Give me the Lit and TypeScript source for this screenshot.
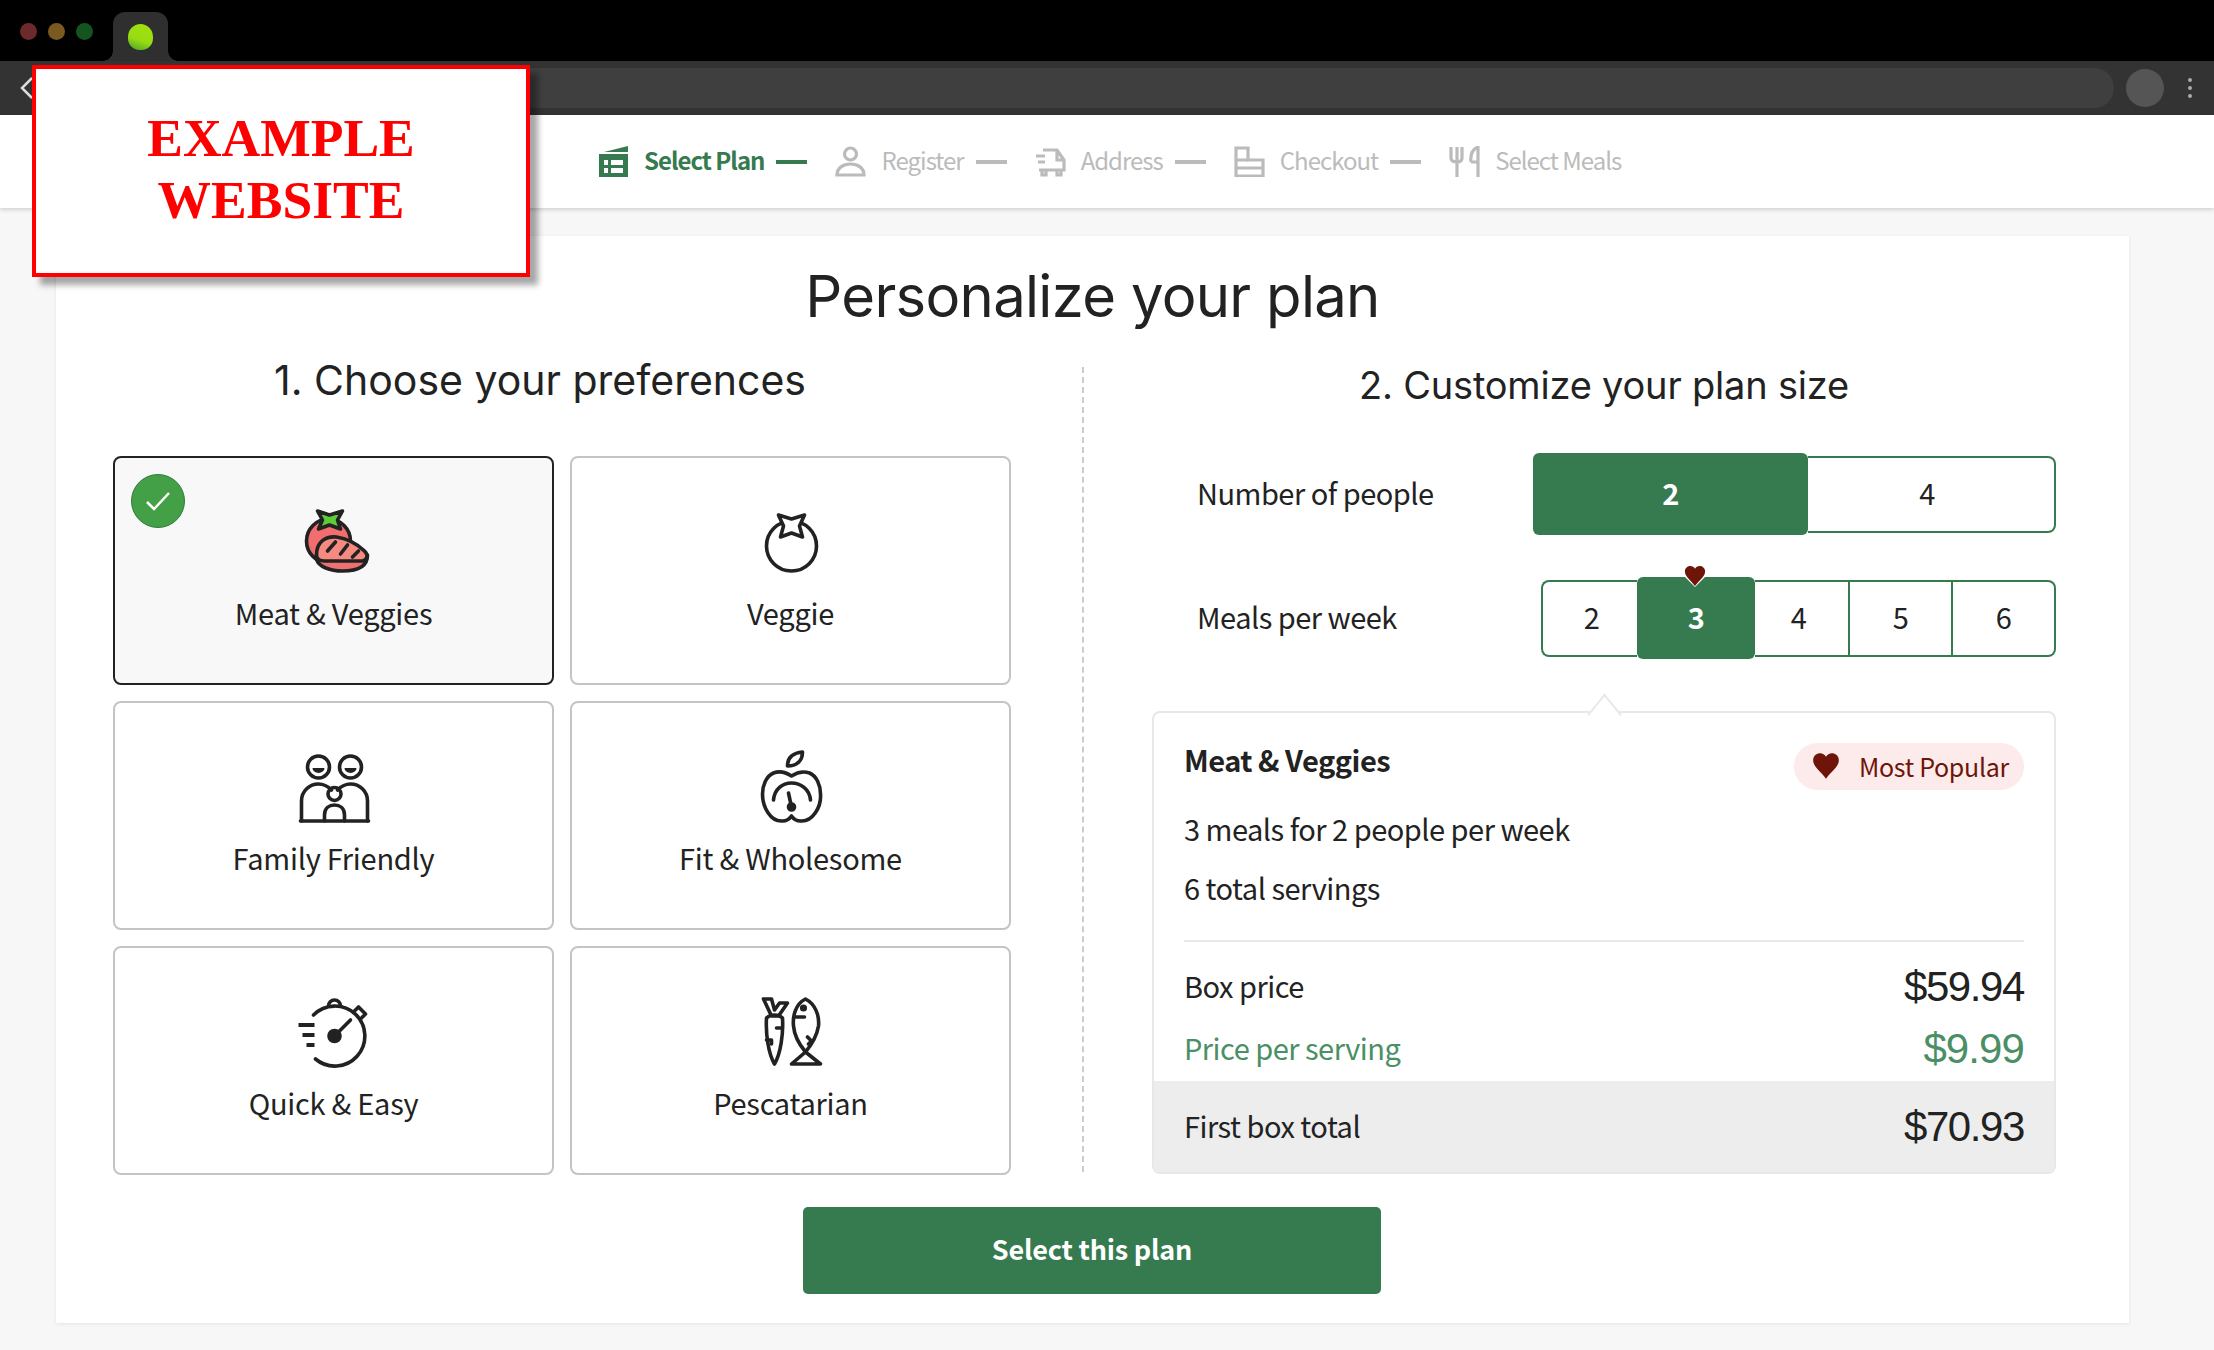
import { LitElement, html, css, svg } from 'lit';
import { customElement, state } from 'lit/decorators.js';

const heart = (size: number) => html`<svg class="heart" width=${size} height=${size} viewBox="0 0 24 24"><path d="M12 23 C8 17 1 13 1 7 C1 3 4 1 7 1 C9 1 11 2 12 4 C13 2 15 1 17 1 C20 1 23 3 23 7 C23 13 16 17 12 23 Z" fill="#6f1408"/></svg>`;

// option icons are drawn in a 120x100 box
const icons: Record<string, any> = {
  meat: svg`
    <circle cx="48" cy="52" r="22" fill="#f26d6d"/>
    <path d="M37 22 L49 26 L62 22 L57 31 L60 40 L49 36 L38 40 L42 31 Z" fill="#5ecb3a"/>
    <path d="M36 70 C38 78 50 82 62 82 C76 82 87 78 87 66 L36 66 Z" fill="#ef7070"/>
    <path d="M36 66 C36 52 46 47 56 48 C68 50 78 56 84 62 C88 66 87 71 82 72 L44 72 C40 72 36 70 36 66 Z" fill="#f58a80"/>
    <path d="M47 62 L55 53 M60 65 L67 56 M72 68 L78 62"/>`,
  veggie: svg`
    <circle cx="61" cy="57" r="25"/>
    <path d="M48 26 L61 30 L74 26 L69 37 L72 48 L61 44 L50 48 L53 37 Z" fill="#fff"/>`,
  family: svg`
    <circle cx="38" cy="28" r="11"/><circle cx="70" cy="28" r="11"/>
    <path d="M32 29 h12 a6 5 0 0 1 -12 0 Z M64 29 h12 a6 5 0 0 1 -12 0 Z" fill="#222" stroke="none"/>
    <path d="M21 82 V62 C21 52 29 45 38 45 C44 45 48 48 51 51"/>
    <path d="M87 82 V62 C87 52 79 45 70 45 C64 45 60 48 57 51"/>
    <circle cx="54" cy="55" r="6.5"/>
    <path d="M44 82 V76 C44 69 49 66 54 66 C59 66 64 69 64 76 V82"/>
    <path d="M20 82 H88"/>`,
  fit: svg`
    <path d="M57 27 C57 19 62 14 72 13 C72 22 66 27 57 27 Z"/>
    <path d="M61 37 C55 33 48 32 43 34 C36 37 32 46 32 55 C32 68 40 83 52 82 C56 82 59 80 61 77 C63 80 66 82 70 82 C82 83 91 68 90 55 C90 46 86 37 79 34 C73 32 67 33 61 37 Z"/>
    <path d="M43 61 C44 50 52 44 61 44 C70 44 79 50 80 61"/>
    <path d="M58 54 L61 68"/><circle cx="61" cy="68" r="3" fill="#222"/>`,
  quick: svg`
    <path d="M33 31 A30 30 0 1 1 35 75"/>
    <path d="M48 22 A6 6 0 0 1 60 22"/>
    <path d="M74 27 L78 23 L85 30 L81 34"/>
    <path d="M18 41 H34 M22 51 H34 M26 61 H34" stroke-width="4" stroke-linecap="butt"/>
    <circle cx="54" cy="52" r="5.5" fill="#222"/>
    <path d="M54 52 L70 36"/>`,
  pesca: svg`
    <path d="M33 15 L41 15 L44 26 L49 19 L57 19 L48 32 L41 32 Z"/>
    <path d="M36 34 C35 50 38 70 44 80 C50 70 53 50 52 34 C48 30 40 30 36 34 Z"/>
    <path d="M52 44 H46 M36 56 H41 V60"/>
    <path d="M75 15 C65 20 62 32 63 42 C64 54 70 62 75 68 C80 62 86 54 88 42 C89 32 85 20 75 15 Z"/>
    <path d="M75 68 L61 80 H90 Z"/>
    <path d="M65 33 H74 M77 53 L81 57 L78 60"/>
    <circle cx="73" cy="24" r="1.8" fill="#222"/>`,
};

// step icons, 31x31
const stepIcons: any[] = [
  svg`<path d="M5 6 L29 0 V6 Z" fill="currentColor"/>
    <path d="M0 8 H29 V31 H0 Z M5 14 V19 H9 V14 Z M12 14 V19 H24 V14 Z M5 22 V27 H9 V22 Z M12 22 V27 H24 V22 Z" fill="currentColor" fill-rule="evenodd"/>`,
  svg`<g fill="none" stroke="currentColor" stroke-width="3.2"><circle cx="15.5" cy="8" r="6"/>
    <path d="M2 29 C2 22 8 18 15.5 18 C23 18 29 22 29 29 Z"/></g>`,
  svg`<g fill="none" stroke="currentColor" stroke-width="3.2"><path d="M8 4 H22 L29 14 V24 H4 M22 4 V14 H29"/>
    <path d="M1 10 H10 M3 16 H10"/><path d="M7 24 V29 H11 V24 M22 24 V29 H26 V24"/></g>`,
  svg`<g fill="none" stroke="currentColor" stroke-width="3.2"><path d="M2 30 V2 H14 V14 H29 V30 Z"/>
    <path d="M2 22 H29 M14 14 H2"/></g>`,
  svg`<g fill="none" stroke="currentColor" stroke-width="3.2"><path d="M2 1 V12 C2 15 5 16 8 16 C11 16 13 15 13 12 V1 M8 1 V31"/>
    <path d="M22 16 C21 8 24 3 29 1 V31 M22 16 H29"/></g>`,
];

const steps = ['Select Plan', 'Register', 'Address', 'Checkout', 'Select Meals'];

const options = [
  { label: 'Meat & Veggies', icon: 'meat', selected: true, vb: '-6.5 0 120 100' },
  { label: 'Veggie', icon: 'veggie', selected: false, vb: '0.5 0 120 100' },
  { label: 'Family Friendly', icon: 'family', selected: false, vb: '-6.5 -5 120 100' },
  { label: 'Fit & Wholesome', icon: 'fit', selected: false, vb: '0.5 -5 120 100' },
  { label: 'Quick & Easy', icon: 'quick', selected: false, vb: '-6.5 -5 120 100' },
  { label: 'Pescatarian', icon: 'pesca', selected: false, vb: '0.5 -5 120 100' },
];

@customElement('app-root')
export class AppRoot extends LitElement {
  @state() people = 2;
  @state() meals = 3;

  static styles = css`
    :host {
      display: block;
      position: relative;
      width: 2214px;
      height: 1350px;
      overflow: hidden;
      background: #f7f7f7;
      color: #222;
      font-family: "Noto Sans CJK SC", "Noto Sans", sans-serif;
      font-size: 29px;
      letter-spacing: -0.5px;
    }
    .tabbar {
      height: 61px;
      background: #000;
      display: flex;
      align-items: flex-end;
      padding-left: 20px;
      box-sizing: border-box;
    }
    .lights {
      display: flex;
      gap: 11px;
      align-self: flex-start;
      margin-top: 23px;
    }
    .lights i {
      width: 17px;
      height: 17px;
      border-radius: 50%;
    }
    .tab {
      position: relative;
      width: 55px;
      height: 49px;
      margin-left: 20px;
      background: #2f2f2f;
      border-radius: 12px 12px 0 0;
      display: flex;
      align-items: center;
      justify-content: center;
    }
    .tab::before,
    .tab::after {
      content: "";
      position: absolute;
      bottom: 0;
      width: 10px;
      height: 10px;
      background: radial-gradient(circle at 0 0, #000 9.5px, #2f2f2f 10px);
    }
    .tab::before {
      left: -10px;
    }
    .tab::after {
      right: -10px;
      background: radial-gradient(circle at 100% 0, #000 9.5px, #2f2f2f 10px);
    }
    .fav {
      width: 25px;
      height: 26px;
      border-radius: 50% 50% 45% 45%;
      background: linear-gradient(20deg, #4ea82c 5%, #97dc12 40%, #a4e00e);
    }
    .toolbar {
      height: 54px;
      background: #333;
      display: flex;
      align-items: center;
      padding: 0 22px 0 20px;
      box-sizing: border-box;
    }
    .url {
      flex: 1;
      height: 40px;
      margin-left: 20px;
      border-radius: 20px;
      background: #3f3f3f;
    }
    .avatar {
      width: 38px;
      height: 38px;
      border-radius: 50%;
      background: #555;
      margin-left: 12px;
    }
    .dots {
      margin-left: 24px;
      display: flex;
      flex-direction: column;
      gap: 4px;
    }
    .dots i {
      width: 4px;
      height: 4px;
      background: #aaa;
      border-radius: 50%;
    }
    .steps {
      height: 93px;
      background: #fff;
      box-shadow: 0 2px 4px rgba(0, 0, 0, 0.15);
      display: flex;
      align-items: center;
      padding-left: 599px;
      box-sizing: border-box;
      color: #bbb;
      font-size: 24px;
      letter-spacing: -1px;
      line-height: 32px;
      position: relative;
    }
    .step {
      display: flex;
      align-items: center;
    }
    .step svg {
      width: 31px;
      height: 31px;
      margin-right: 15px;
    }
    .step span {
      padding-bottom: 3px;
    }
    .step.active {
      color: #367a4f;
      font-weight: 700;
    }
    .step.active svg {
      margin-right: 14px;
    }
    .dash {
      width: 31px;
      height: 4px;
      background: currentColor;
      margin: 0 28px 0 12px;
    }
    .card {
      margin: 28px 85px 0 56px;
      background: #fff;
      box-shadow: 0 1px 4px rgba(0, 0, 0, 0.08);
      padding: 28px 73px 30px 57px;
      height: 1087px;
      box-sizing: border-box;
    }
    h1 {
      margin: 0 -16px 27px 0;
      font: 400 58px/64px Inter, sans-serif;
      letter-spacing: -0.7px;
      text-align: center;
      color: #222;
    }
    .cols {
      display: grid;
      grid-template-columns: 898px 141px 904px;
    }
    h2 {
      margin: 0;
      font: 400 38px/50px Inter, sans-serif;
      letter-spacing: -0.2px;
      text-align: center;
    }
    .left h2 {
      font-size: 41px;
      letter-spacing: 0;
      padding-right: 44px;
      margin-bottom: 51px;
    }
    .right h2 {
      line-height: 60px;
      margin-bottom: 38px;
    }
    .divider {
      margin: 12px 0 0 71px;
      border-left: 2px dashed #ccc;
      height: 805px;
    }
    .options {
      display: grid;
      grid-template-columns: 441px 441px;
      grid-auto-rows: 229px;
      column-gap: 16px;
      row-gap: 16px;
    }
    .opt {
      position: relative;
      box-sizing: border-box;
      border: 2px solid #c4c4c4;
      border-radius: 8px;
      padding-top: 31px;
      text-align: center;
      background: #fff;
    }
    .opt.selected {
      background: #f8f8f8;
      border-color: #222;
    }
    .opt svg.ico {
      display: block;
      width: 120px;
      height: 100px;
      margin: 0 auto;
      fill: none;
      stroke: #222;
      stroke-width: 3.6;
      stroke-linejoin: round;
      stroke-linecap: round;
    }
    .opt .label {
      margin-top: 3px;
      line-height: 40px;
      letter-spacing: -0.25px;
    }
    .check {
      position: absolute;
      left: 16px;
      top: 16px;
      width: 54px;
      height: 54px;
      border-radius: 50%;
      background: #43a047;
      border: 1px solid #2f7d3c;
      box-sizing: border-box;
      display: flex;
      align-items: center;
      justify-content: center;
    }
    .row {
      display: flex;
      align-items: center;
      justify-content: space-between;
      padding-left: 45px;
      line-height: 40px;
    }
    .row > span {
      padding-bottom: 5px;
    }
    .row + .row {
      margin-top: 42px;
    }
    .seg-group {
      display: flex;
      align-items: center;
    }
    .seg {
      box-sizing: border-box;
      height: 77px;
      display: flex;
      align-items: center;
      justify-content: center;
      border: 2px solid #367a4f;
      border-left: 0;
      background: #fff;
      padding-bottom: 4px;
    }
    .seg.on {
      height: 82px;
      background: #367a4f;
      color: #fff;
      font-weight: 700;
      border: 0;
      border-radius: 6px;
      position: relative;
    }
    .seg:first-child:not(.on) {
      border-left: 2px solid #367a4f;
      border-radius: 8px 0 0 8px;
      padding-left: 3px;
    }
    .seg:last-child {
      border-radius: 0 8px 8px 0;
    }
    .people .seg { width: 248px; padding-right: 8px; }
    .people .seg.on { width: 275px; padding-right: 0; }
    .meals .seg { width: 103px; }
    .meals .seg:first-child { width: 96px; }
    .meals .seg.on { width: 118px; }
    .meals .seg.before-on { border-right: 0; }
    .meals .seg.after-on { width: 95px; padding-right: 6px; }
    .pin {
      position: absolute;
      top: -12px;
      left: 50%;
      transform: translateX(-50%);
      width: 0;
      height: 0;
      display: flex;
      justify-content: center;
    }
    .pin::before {
      content: "";
      position: absolute;
      top: 12px;
      left: -11px;
      border: 10px solid transparent;
      border-top: 10px solid #fff;
    }
    .pin .heart {
      position: absolute;
      top: 0;
      left: -12px;
    }
    .panel {
      position: relative;
      margin-top: 52px;
      height: 463px;
      box-sizing: border-box;
      border: 2px solid #e8e8e8;
      border-radius: 8px;
      padding-top: 30px;
      display: flex;
      flex-direction: column;
      line-height: 40px;
    }
    .panel::before {
      content: "";
      position: absolute;
      top: -12px;
      left: 437px;
      width: 25px;
      height: 25px;
      background: #fff;
      border-top: 2px solid #e8e8e8;
      border-left: 2px solid #e8e8e8;
      transform: rotate(45deg) skew(6deg, 6deg);
    }
    .line {
      display: flex;
      justify-content: space-between;
      align-items: center;
      margin: 0 30px;
      position: relative;
    }
    .line > span:first-child {
      padding-bottom: 4px;
    }
    .head {
      align-items: flex-start;
    }
    .head b {
      font-weight: 700;
      line-height: 32px;
    }
    .badge {
      height: 47px;
      width: 230px;
      box-sizing: border-box;
      padding: 0 0 2px 18px;
      border-radius: 24px;
      background: #fdeaea;
      color: #6f1408;
      display: flex;
      align-items: center;
      gap: 19px;
      font-size: 25px;
      letter-spacing: -0.3px;
      white-space: nowrap;
    }
    .info {
      margin: 19px 30px 0;
    }
    .info.first {
      margin-top: 18px;
    }
    hr {
      margin: 33px 30px 0;
      border: 0;
      height: 2px;
      background: #e8e8e8;
    }
    .price {
      font: 400 42px/50px "Liberation Sans", sans-serif;
      letter-spacing: -1.4px;
    }
    .box { margin-top: 20px; height: 50px; line-height: 40px; }
    .serving { margin-top: 12px; height: 50px; line-height: 40px; color: #4a8f65; }
    .serving .price { letter-spacing: -0.9px; }
    .total {
      margin: 7px 0 0;
      flex: 1;
      padding: 0 30px;
      background: #ededed;
      border-radius: 0 0 6px 6px;
    }
    .cta {
      display: block;
      width: 578px;
      height: 87px;
      margin: 32px 0 0 690px;
      padding: 0 0 4px;
      border: 0;
      border-radius: 5px;
      background: #367a4f;
      color: #fff;
      font: 700 27px/40px "Noto Sans CJK SC", "Noto Sans", sans-serif;
      letter-spacing: -0.2px;
      text-align: center;
    }
    .stamp {
      position: absolute;
      left: 32px;
      top: 65px;
      width: 498px;
      height: 212px;
      box-sizing: border-box;
      border: 4px solid #f00;
      background: #fff;
      box-shadow: 8px 8px 6px rgba(0, 0, 0, 0.35);
      color: #f00;
      font: 700 53.5px/62px "Liberation Serif", serif;
      letter-spacing: 0;
      text-align: center;
      padding-top: 38px;
    }
  `;

  render() {
    return html`
      <div class="tabbar">
        <div class="lights">
          <i style="background:#6c2a2a"></i><i style="background:#7a5a20"></i><i style="background:#14551f"></i>
        </div>
        <div class="tab"><div class="fav"></div></div>
      </div>
      <div class="toolbar">
        <svg width="14" height="24" viewBox="0 0 14 24"><path d="M12 2 L2 12 L12 22" fill="none" stroke="#ddd" stroke-width="2.5"/></svg>
        <div class="url"></div>
        <div class="avatar"></div>
        <div class="dots"><i></i><i></i><i></i></div>
      </div>
      <nav class="steps">
        ${steps.map((s, i) => html`
          <div class="step ${i === 0 ? 'active' : ''}">
            <svg viewBox="0 0 31 31">${stepIcons[i]}</svg>
            <span>${s}</span>
            ${i < steps.length - 1 ? html`<div class="dash"></div>` : ''}
          </div>`)}
      </nav>
      <main class="card">
        <h1>Personalize your plan</h1>
        <div class="cols">
          <section class="left">
            <h2>1. Choose your preferences</h2>
            <div class="options">
              ${options.map((o) => html`
                <div class="opt ${o.selected ? 'selected' : ''}">
                  ${o.selected ? html`<span class="check"><svg width="26" height="22" viewBox="0 0 26 22"><path d="M2 12 L9 19 L24 3" fill="none" stroke="#fff" stroke-width="2.5"/></svg></span>` : ''}
                  <svg class="ico" viewBox=${o.vb}>${icons[o.icon]}</svg>
                  <div class="label">${o.label}</div>
                </div>`)}
            </div>
          </section>
          <div class="divider"></div>
          <section class="right">
            <h2>2. Customize your plan size</h2>
            <div class="row">
              <span>Number of people</span>
              <div class="seg-group people">
                ${[2, 4].map((n) => html`<div class="seg ${n === this.people ? 'on' : ''}">${n}</div>`)}
              </div>
            </div>
            <div class="row">
              <span>Meals per week</span>
              <div class="seg-group meals">
                ${[2, 3, 4, 5, 6].map((n) => html`
                  <div class="seg ${n === this.meals ? 'on' : ''} ${n === this.meals - 1 ? 'before-on' : ''} ${n === this.meals + 1 ? 'after-on' : ''}">
                    ${n === this.meals ? html`<span class="pin">${heart(22)}</span>` : ''}${n}
                  </div>`)}
              </div>
            </div>
            <div class="panel">
              <div class="line head">
                <b>Meat &amp; Veggies</b>
                <span class="badge">${heart(28)}Most Popular</span>
              </div>
              <div class="info first">3 meals for 2 people per week</div>
              <div class="info">6 total servings</div>
              <hr />
              <div class="line box"><span>Box price</span><span class="price">$59.94</span></div>
              <div class="line serving"><span>Price per serving</span><span class="price">$9.99</span></div>
              <div class="line total"><span>First box total</span><span class="price">$70.93</span></div>
            </div>
          </section>
        </div>
        <button class="cta">Select this plan</button>
      </main>
      <div class="stamp">EXAMPLE<br />WEBSITE</div>
    `;
  }
}
